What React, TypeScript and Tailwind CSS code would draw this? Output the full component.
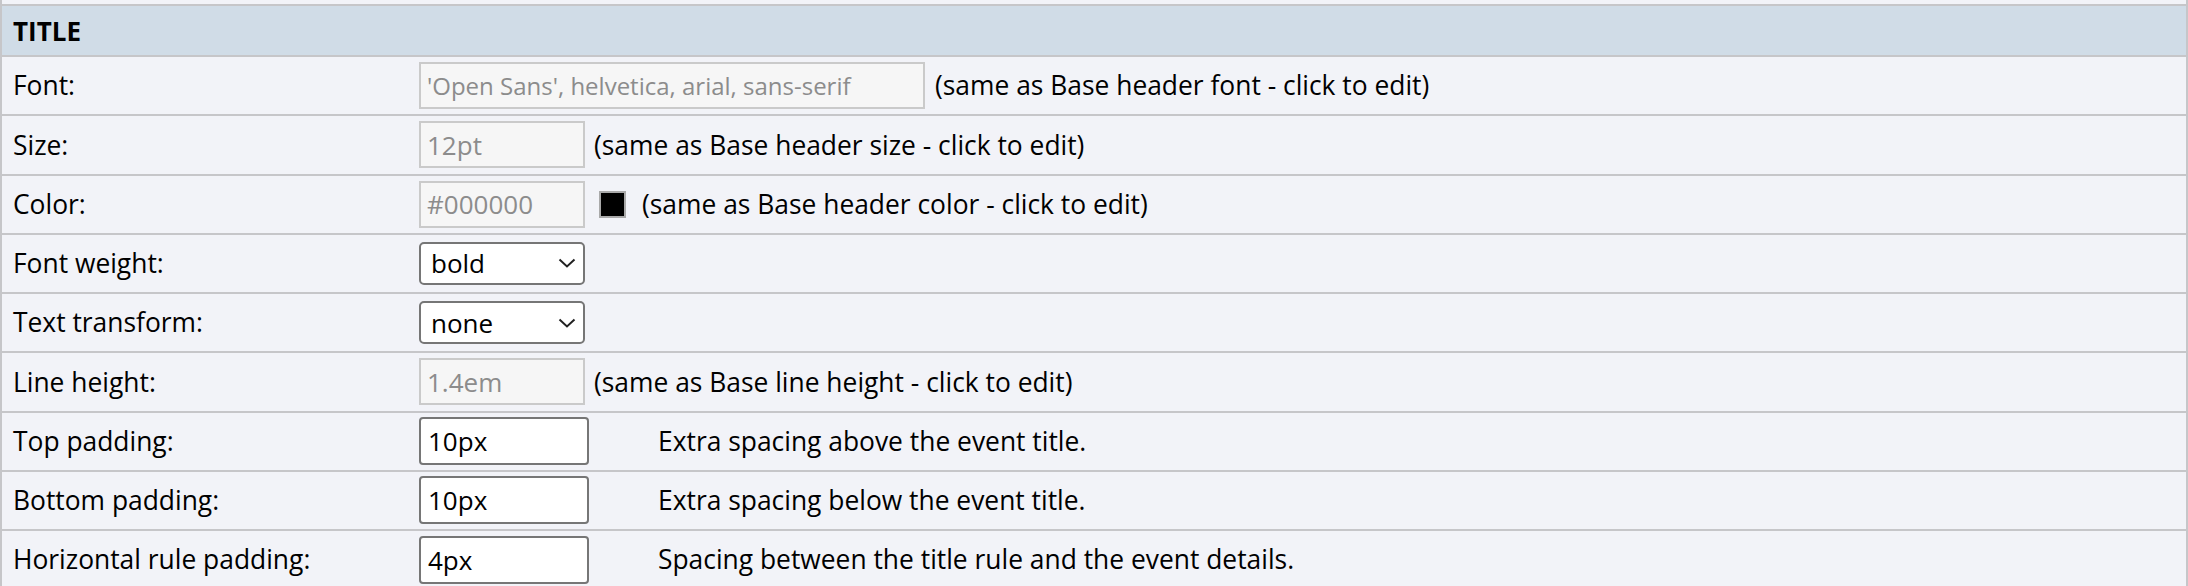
import React from "react";

const Chevron = () => (
  <svg width="18" height="10" viewBox="0 0 18 10" className="absolute right-[7px] top-1/2 -translate-y-1/2 pointer-events-none">
    <path d="M1.5 1.5 L9 8.5 L16.5 1.5" fill="none" stroke="#222" strokeWidth="2" />
  </svg>
);

function Row({ label, children }: { label: string; children?: React.ReactNode }) {
  return (
    <div className="flex h-[59.25px] items-center border-t-2 border-[#c6c6c9] bg-[#f2f3f8]">
      <div className="w-[417px] shrink-0 pl-[11px] text-black">{label}</div>
      <div className="flex items-center">{children}</div>
    </div>
  );
}

function Disabled({ value, w, small }: { value: string; w: string; small?: boolean }) {
  return (
    <div
      className={`${w} ${small ? "text-[24px]" : "text-[26px]"} flex h-[47px] items-center border-2 border-[#cacaca] bg-[#f6f6f6] pl-[6px] text-[#8c8c8c] whitespace-nowrap overflow-hidden`}
    >
      {value}
    </div>
  );
}

function Select({ value }: { value: string }) {
  return (
    <div className="relative flex h-[43px] w-[166px] items-center rounded-[5px] border-2 border-[#767676] bg-white pl-[10px] text-[26px] text-black">
      {value}
      <Chevron />
    </div>
  );
}

function TextInput({ value }: { value: string }) {
  return (
    <div className="flex h-[48px] w-[170px] items-center rounded-[4px] border-2 border-[#767676] bg-white pl-[7px] text-[26px] text-black">
      {value}
    </div>
  );
}

export default function App() {
  return (
    <div
      className="w-[2188px] h-[586px] overflow-hidden bg-[#f2f3f8] text-[26.4px] leading-none"
      style={{ fontFamily: "'Open Sans', 'Noto Sans', sans-serif" }}
    >
      <div className="border-x-2 border-[#c6c6c9]">
        <div className="h-[4px] bg-[#f2f3f8]" />
        <div className="flex h-[51px] items-center border-t-2 border-[#c6c6c9] bg-[#d0dce7] pl-[11px] text-[26px] font-bold text-black">
          TITLE
        </div>
        <Row label="Font:">
          <Disabled value="'Open Sans', helvetica, arial, sans-serif" w="w-[506px]" small />
          <span className="ml-[10px] text-black">(same as Base header font - click to edit)</span>
        </Row>
        <Row label="Size:">
          <Disabled value="12pt" w="w-[166px]" />
          <span className="ml-[9px] text-black">(same as Base header size - click to edit)</span>
        </Row>
        <Row label="Color:">
          <Disabled value="#000000" w="w-[166px]" />
          <span className="ml-[14px] inline-block h-[27px] w-[27px] border-2 border-[#a9a9a9] bg-black" />
          <span className="ml-[16px] text-black">(same as Base header color - click to edit)</span>
        </Row>
        <Row label="Font weight:">
          <Select value="bold" />
        </Row>
        <Row label="Text transform:">
          <Select value="none" />
        </Row>
        <Row label="Line height:">
          <Disabled value="1.4em" w="w-[166px]" />
          <span className="ml-[9px] text-black">(same as Base line height - click to edit)</span>
        </Row>
        <Row label="Top padding:">
          <TextInput value="10px" />
          <span className="ml-[69px] text-black">Extra spacing above the event title.</span>
        </Row>
        <Row label="Bottom padding:">
          <TextInput value="10px" />
          <span className="ml-[69px] text-black">Extra spacing below the event title.</span>
        </Row>
        <Row label="Horizontal rule padding:">
          <TextInput value="4px" />
          <span className="ml-[69px] text-black">Spacing between the title rule and the event details.</span>
        </Row>
      </div>
    </div>
  );
}
